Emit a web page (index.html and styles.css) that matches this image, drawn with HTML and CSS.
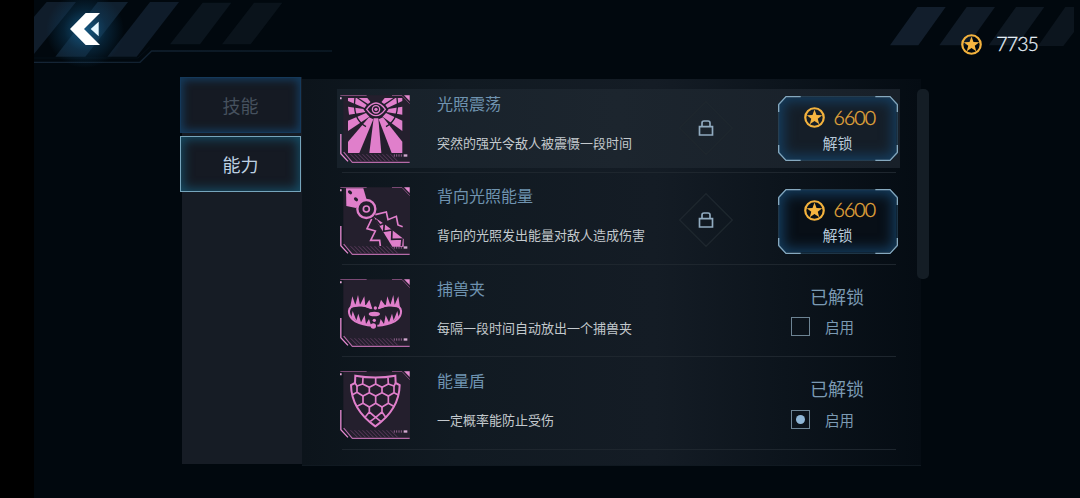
FILE: index.html
```html
<!DOCTYPE html>
<html lang="zh-CN">
<head>
    <meta charset="UTF-8">
    <meta name="viewport" content="width=device-width, initial-scale=1.0">
    <title>能力</title>
    <link rel="stylesheet" href="styles.css">
</head>
<body>
    <!-- 公用图形 -->
    <svg class="defs" width="0" height="0">
        <defs>
            <pattern id="hatch" width="12" height="12" patternUnits="userSpaceOnUse">
                <path d="M-2 -2L14 14M-2 10L2 14M10 -2L14 2" stroke="#6a4069" stroke-width="2.500"/>
            </pattern>
            <linearGradient id="fadeLine">
                <stop offset="0" stop-color="#152536"/>
                <stop offset="1" stop-color="#0c1b27"/>
            </linearGradient>
        </defs>
        <symbol id="frame" viewBox="30 28 210 207">
            <path d="M40 29H240V229H66L40 203Z" fill="#241f2d"/>
            <path d="M31 29.500H110M186 29.500H216L239 54" fill="none" stroke="#7a4974" stroke-width="3"/>
            <path d="M222 29H239V46Z" fill="#e58bd0"/>
            <path d="M30 35H35V41H30Z" fill="#e3a6d6"/>
            <path d="M56 206H190L210 227H76Z" fill="url(#hatch)"/>
            <path d="M32.500 145V204L54 227" fill="none" stroke="#e68ad1" stroke-width="4"/>
            <path d="M41 199L67 230H239" fill="none" stroke="#b56aa8" stroke-width="3.500"/>
            <path d="M193 206V213M200 206V213M207 206V213M214 206V213" stroke="#91628e" stroke-width="3"/>
            <path d="M221 206H232V213H221Z" fill="#d3a9d0"/>
        </symbol>
        <symbol id="coin" viewBox="0 0 42 42">
            <circle cx="21" cy="21" r="18.500" fill="none" stroke="#f3b23d" stroke-width="4.400"/>
            <path d="M21 5L25 16L36.500 16.500L27.500 23.500L30.500 34.500L21 28.200L11.500 34.500L14.500 23.500L5.500 16.500L17 16Z" fill="#f6b540"/>
        </symbol>
        <symbol id="lock" viewBox="0 0 162 162">
            <path class="diamond" d="M81 2L160 81L81 160L2 81Z"/>
            <path d="M61.500 77H100.500V102H61.500ZM69 77V66Q69 60 75 60H87Q93 60 93 66V77" fill="none" stroke="#91abc0" stroke-width="5"/>
        </symbol>
        <symbol id="corners" viewBox="0 0 360 195">
            <path d="M22 2H338L358 22V173L338 193H22L2 173V22Z" fill="none" stroke="#31556e" stroke-width="2"/>
            <path d="M2 48V26L24 2H68M292 2H336L358 26V48M358 147V169L336 193H292M68 193H24L2 169V147" fill="none" stroke="#86a9bf" stroke-width="4"/>
        </symbol>
    </svg>

    <div class="screen">
        <header class="header">
            <svg class="back" viewBox="102 0 918 240">
                <g fill="#0d1721">
                    <path fill="#101d2b" d="M102 50L140 6H228L102 162Z"/>
                    <path fill="#10202f" d="M293 6H384L256 170H166Z"/>
                    <path fill="#0f1c2a" d="M450 6H537L410 170H322Z"/>
                    <path fill="#0b151e" d="M608 8H694L600 133H510Z"/>
                    <path fill="#0a131b" d="M762 8H847L752 133H666Z"/>
                </g>
                <path d="M102 187H420L455 153H996" fill="none" stroke="url(#fadeLine)" stroke-width="4"/>
                <path d="M102 174H414L449 141" fill="none" stroke="#07121c" stroke-width="2"/>
            </svg>
            <div class="glow"></div>
            <svg class="arrow" viewBox="208 36 94 102">
                <path d="M257 39H300L252 87L300 135H257L210 87Z" fill="#fff"/>
                <path d="M296 65V109L272 87Z" fill="#e6f7ff"/>
            </svg>
            <svg class="stripes" viewBox="0 0 630 240">
                <path fill="#121e2c" d="M142 21H227L145 136H60Z"/>
                <path fill="#101b27" d="M290 21H375L293 136H208Z"/>
                <path fill="#0e1822" d="M438 21H523L441 136H356Z"/>
                <path fill="#0c151e" d="M586 21H612V96L580 138H504Z"/>
            </svg>
            <div class="wallet">
                <svg class="coin"><use href="#coin"/></svg>
                <span>7735</span>
            </div>
        </header>

        <main class="content">
            <nav class="tabs">
                <div class="tab">技能</div>
                <div class="tab active">能力</div>
            </nav>

            <section class="panel">
                <div class="row selected">
                    <div class="row-body">
                        <div class="icon">
                            <svg viewBox="30 28 210 207"><use href="#frame" x="30" y="28" width="210" height="207"/>
                                <g fill="#e07fcb">
                                    <path d="M54 37H80L110 58L104 67L54 46Z"/>
                                    <path d="M86 37H112L122 50L114 55Z"/>
                                    <path d="M217 37H196L166 58L172 67L217 46Z"/>
                                    <path d="M190 37H164L154 50L162 55Z"/>
                                    <path d="M54 63L101 70L107 79L57 87Z"/>
                                    <path d="M217 63L175 70L169 79L217 87Z"/>
                                    <path d="M54 105L108 82L118 93L54 136Z"/>
                                    <path d="M217 105L168 82L158 93L217 136Z"/>
                                    <path d="M54 168L117 95L130 101L88 202H54Z"/>
                                    <path d="M217 168L159 95L146 101L185 202H217Z"/>
                                    <path d="M131 98H145L154 202H118Z"/>
                                </g>
                                <path d="M75 36Q71 66 78 88Q86 111 108 123M168 123Q190 111 198 88Q205 66 201 36" fill="none" stroke="#1e202c" stroke-width="4"/>
                                <path d="M108 71Q123 51 138 51Q153 51 168 71Q153 91 138 91Q123 91 108 71Z" fill="#211e2c" stroke="#211e2c" stroke-width="12"/>
                                <path d="M110 71Q124 52 138 52Q152 52 166 71Q152 90 138 90Q124 90 110 71Z" fill="none" stroke="#e07fcb" stroke-width="4"/>
                                <circle cx="138" cy="71" r="11" fill="none" stroke="#e07fcb" stroke-width="4"/>
                                <circle cx="138" cy="71" r="5" fill="#e07fcb"/>
                            </svg>
                        </div>
                        <div class="info">
                            <h2>光照震荡</h2>
                            <p>突然的强光令敌人被震慑一段时间</p>
                        </div>
                        <svg class="lock"><use href="#lock"/></svg>
                        <div class="buy">
                            <svg class="corners"><use href="#corners"/></svg>
                            <div class="price"><svg class="coin"><use href="#coin"/></svg><span>6600</span></div>
                            <div class="buy-label">解锁</div>
                        </div>
                    </div>
                    <div class="line"></div>
                </div>

                <div class="row">
                    <div class="row-body">
                        <div class="icon">
                            <svg viewBox="30 28 210 207"><use href="#frame" x="30" y="28" width="210" height="207"/>
                                <path d="M48 32H100L110 66L78 91L49 85Z" fill="#e07fcb"/>
                                <ellipse cx="60" cy="44" rx="7" ry="5" transform="rotate(40 60 44)" fill="#241f2d"/>
                                <ellipse cx="78" cy="65" rx="7" ry="5" transform="rotate(40 78 65)" fill="#241f2d"/>
                                <circle cx="109" cy="94" r="27" fill="#241f2d" stroke="#e07fcb" stroke-width="7"/>
                                <circle cx="109" cy="94" r="9" fill="none" stroke="#e07fcb" stroke-width="5"/>
                                <path d="M132 118L162 138L221 184V207H187Z" fill="#e07fcb"/>
                                <path d="M138 126L150 142L163 137L161 161L186 157L185 185L216 184L214 205" fill="none" stroke="#241f2d" stroke-width="5"/>
                                <path d="M136 111L169 103L174 126L199 116L204 142L218 147" fill="none" stroke="#e07fcb" stroke-width="5"/>
                                <path d="M125 124L111 153L136 160L122 188L149 188L151 205" fill="none" stroke="#e07fcb" stroke-width="5"/>
                            </svg>
                        </div>
                        <div class="info">
                            <h2>背向光照能量</h2>
                            <p>背向的光照发出能量对敌人造成伤害</p>
                        </div>
                        <svg class="lock"><use href="#lock"/></svg>
                        <div class="buy">
                            <svg class="corners"><use href="#corners"/></svg>
                            <div class="price"><svg class="coin"><use href="#coin"/></svg><span>6600</span></div>
                            <div class="buy-label">解锁</div>
                        </div>
                    </div>
                    <div class="line"></div>
                </div>

                <div class="row">
                    <div class="row-body">
                        <div class="icon">
                            <svg viewBox="30 28 210 207"><use href="#frame" x="30" y="28" width="210" height="207"/>
                                <path d="M125 116Q98 103 68 109C50 118 55 143 76 155Q98 166 128 168M145 116Q172 103 202 109C220 118 215 143 194 155Q172 166 142 168" fill="none" stroke="#e07fcb" stroke-width="6"/>
                                <g fill="#e07fcb">
                                    <path d="M60 114L67 80L76 106L84 76L90 106L103 80L106 109L118 90L127 118L96 109Z"/>
                                    <path d="M210 114L205 80L194 106L190 76L181 106L172 80L167 109L153 90L144 118L174 109Z"/>
                                    <path d="M64 143L68 124L79 152L85 132L93 158L104 137L108 163L117 148L123 167L90 162Z"/>
                                    <path d="M206 143L202 124L191 152L186 132L177 158L167 137L162 163L152 148L147 167L180 162Z"/>
                                    <ellipse cx="133" cy="133" rx="17" ry="7"/>
                                    <circle cx="136" cy="115" r="5"/>
                                    <circle cx="133" cy="152" r="5"/>
                                    <circle cx="130" cy="169" r="8"/>
                                </g>
                            </svg>
                        </div>
                        <div class="info">
                            <h2>捕兽夹</h2>
                            <p>每隔一段时间自动放出一个捕兽夹</p>
                        </div>
                        <div class="owned">
                            <div class="owned-title">已解锁</div>
                            <div class="enable"><span class="box"></span>启用</div>
                        </div>
                    </div>
                    <div class="line"></div>
                </div>

                <div class="row">
                    <div class="row-body">
                        <div class="icon">
                            <svg viewBox="30 30 210 207"><use href="#frame" x="30" y="30" width="210" height="207"/>
                                <g fill="none" stroke="#e07fcb" stroke-width="5">
                                    <path stroke-width="6" d="M76 44Q136 55 196 44L197 66L209 72Q208 145 136 196Q64 145 63 72L75 66Z"/>
                                    <path d="M75 66L81 75L98 69L99 50M98 69L118 79L137 69V51M137 69L156 79L175 69L174 50M175 69L192 75L197 66"/>
                                    <path d="M81 75V94L66 102M81 94L99 105L118 95V79M118 95L137 105L156 95V79M156 95L175 105L192 95V75M192 95L205 102"/>
                                    <path d="M99 105V127L81 136M99 127L118 138L137 127V105M137 127L156 138L175 127V105M175 127L191 136"/>
                                    <path d="M118 138V153L104 170M118 153L137 169L156 153V138M156 153L168 170M137 169L121 181M137 169L152 181"/>
                                </g>
                            </svg>
                        </div>
                        <div class="info">
                            <h2>能量盾</h2>
                            <p>一定概率能防止受伤</p>
                        </div>
                        <div class="owned">
                            <div class="owned-title">已解锁</div>
                            <div class="enable"><span class="box checked"></span>启用</div>
                        </div>
                    </div>
                    <div class="line"></div>
                </div>
            </section>

            <div class="scrollbar"></div>
        </main>
    </div>
</body>
</html>
```

FILE: styles.css
```css
* {
    box-sizing: border-box;
}

body {
    margin: 0;
    background: #000;
    font-family: "Noto Sans CJK SC", sans-serif;
    overflow: hidden;
}

svg {
    display: block;
}

.defs {
    position: absolute;
}

.screen {
    height: 498px;
    margin-left: 34px;
    background: #01080e;
    overflow: hidden;
}

/* 顶部 */
.header {
    position: relative;
    height: 77px;
    display: flex;
    justify-content: flex-end;
}

.back {
    position: absolute;
    left: 0;
    top: 0;
    width: 306px;
    height: 80px;
}

.glow {
    position: absolute;
    left: 12px;
    top: -8px;
    width: 78px;
    height: 76px;
    background: radial-gradient(closest-side, rgba(22, 105, 155, 0.75), rgba(14, 68, 105, 0.4) 55%, transparent);
}

.arrow {
    position: absolute;
    left: 35px;
    top: 12px;
    width: 32px;
    height: 34px;
}

.stripes {
    position: absolute;
    right: 0;
    top: 0;
    width: 210px;
    height: 80px;
}

.wallet {
    position: relative;
    display: flex;
    align-items: center;
    gap: 14px;
    height: 22px;
    margin: 33px 42px 0 0;
    font: 300 19.5px/22px Lato, sans-serif;
    letter-spacing: -0.9px;
    -webkit-text-stroke: 0.3px;
    color: #e3edf5;
}

.coin {
    width: 21px;
    height: 21px;
}

.content {
    display: flex;
    align-items: flex-start;
    padding-left: 146px;
}

/* 标签 */
.tabs {
    display: flex;
    flex-direction: column;
    gap: 3px;
    width: 122px;
    height: 387px;
    background: linear-gradient(#161c25, #161c25) 2px 0 / 120px 100% no-repeat;
}

.tab {
    width: 121px;
    height: 56px;
    border: 1px solid #15395a;
    background: #151a23;
    box-shadow: inset 0 0 9px 2px #153c5e;
    text-align: center;
    font-size: 18px;
    line-height: 55px;
    color: #46515e;
}

.tab.active {
    border-color: #76a5bc;
    box-shadow: inset 0 0 11px 2px #164d66;
    color: #bdd0e2;
}

/* 列表 */
.panel {
    width: 619px;
    height: 387px;
    margin-top: 2px;
    padding: 1px 21px 0 35px;
    background: linear-gradient(to right, #0c141b, #111a22 25%, #141c25 57%, #0c141c 78%, #050c13);
    border-bottom: 1px solid #101921;
}

.row {
    height: 92.25px;
    padding-top: 8.75px;
}

.row-body {
    display: flex;
    height: 79px;
    padding-left: 3px;
}

.selected .row-body {
    background: linear-gradient(to right, #17212a, #1c252e 50%, #182029);
}

.line {
    height: 1px;
    margin: 4px 4px 0 5px;
    background: #1e262e;
}

.icon {
    width: 70px;
    padding-top: 5.75px;
}

.icon svg {
    width: 70px;
    height: 69px;
}

.info {
    width: 242px;
    margin-left: 27px;
}

.info h2 {
    margin: 2.25px 0 0;
    font-size: 16px;
    font-weight: normal;
    line-height: 24px;
    color: #6f93b0;
}

.info p {
    margin: 18px 0 0;
    font-size: 13px;
    line-height: 20px;
    color: #c3c9cd;
}

.lock {
    width: 54px;
    height: 54px;
    margin: 12px 44.5px 0 0;
}

.diamond {
    fill: none;
    stroke: #1e272e;
    stroke-width: 4;
}

/* 购买按钮 */
.buy {
    position: relative;
    width: 120px;
    height: 65px;
    margin-top: 7.5px;
    padding-top: 10.5px;
    text-align: center;
}

.buy::before {
    content: "";
    position: absolute;
    inset: 1px;
    clip-path: polygon(7px 0, 111px 0, 100% 7px, 100% 56px, 111px 100%, 7px 100%, 0 56px, 0 7px);
    background: #080f17;
    box-shadow: inset 0 0 13px 4px #153f62;
}

.selected .buy::before {
    background: #151e28;
}

.corners {
    position: absolute;
    left: 0;
    top: 0;
    width: 120px;
    height: 65px;
}

.price {
    position: relative;
    display: flex;
    align-items: center;
    gap: 9px;
    height: 22px;
    padding-left: 26px;
    font: 300 19.5px/22px Lato, sans-serif;
    letter-spacing: -0.9px;
    -webkit-text-stroke: 0.3px;
    color: #e8ab3c;
}

.buy-label {
    position: relative;
    font-size: 15px;
    line-height: 22px;
    margin-top: 3px;
    color: #b6c8d8;
}

/* 已解锁 */
.owned {
    width: 120px;
    margin: 9.5px 0 0 98px;
    color: #7b9ab3;
}

.owned-title {
    text-align: center;
    font-size: 18px;
    line-height: 26px;
}

.enable {
    display: flex;
    align-items: center;
    gap: 15px;
    height: 22px;
    margin-top: 7px;
    padding-left: 14px;
    font-size: 14.5px;
}

.box {
    display: flex;
    width: 19px;
    height: 19px;
    border: 1px solid #6d8494;
}

.checked::after {
    content: "";
    width: 9px;
    height: 9px;
    margin: auto;
    border-radius: 50%;
    background: #8fb6d5;
}

.scrollbar {
    width: 12px;
    height: 190px;
    margin: 12px 0 0 -4px;
    border-radius: 5px;
    background: #141d25;
}
```
